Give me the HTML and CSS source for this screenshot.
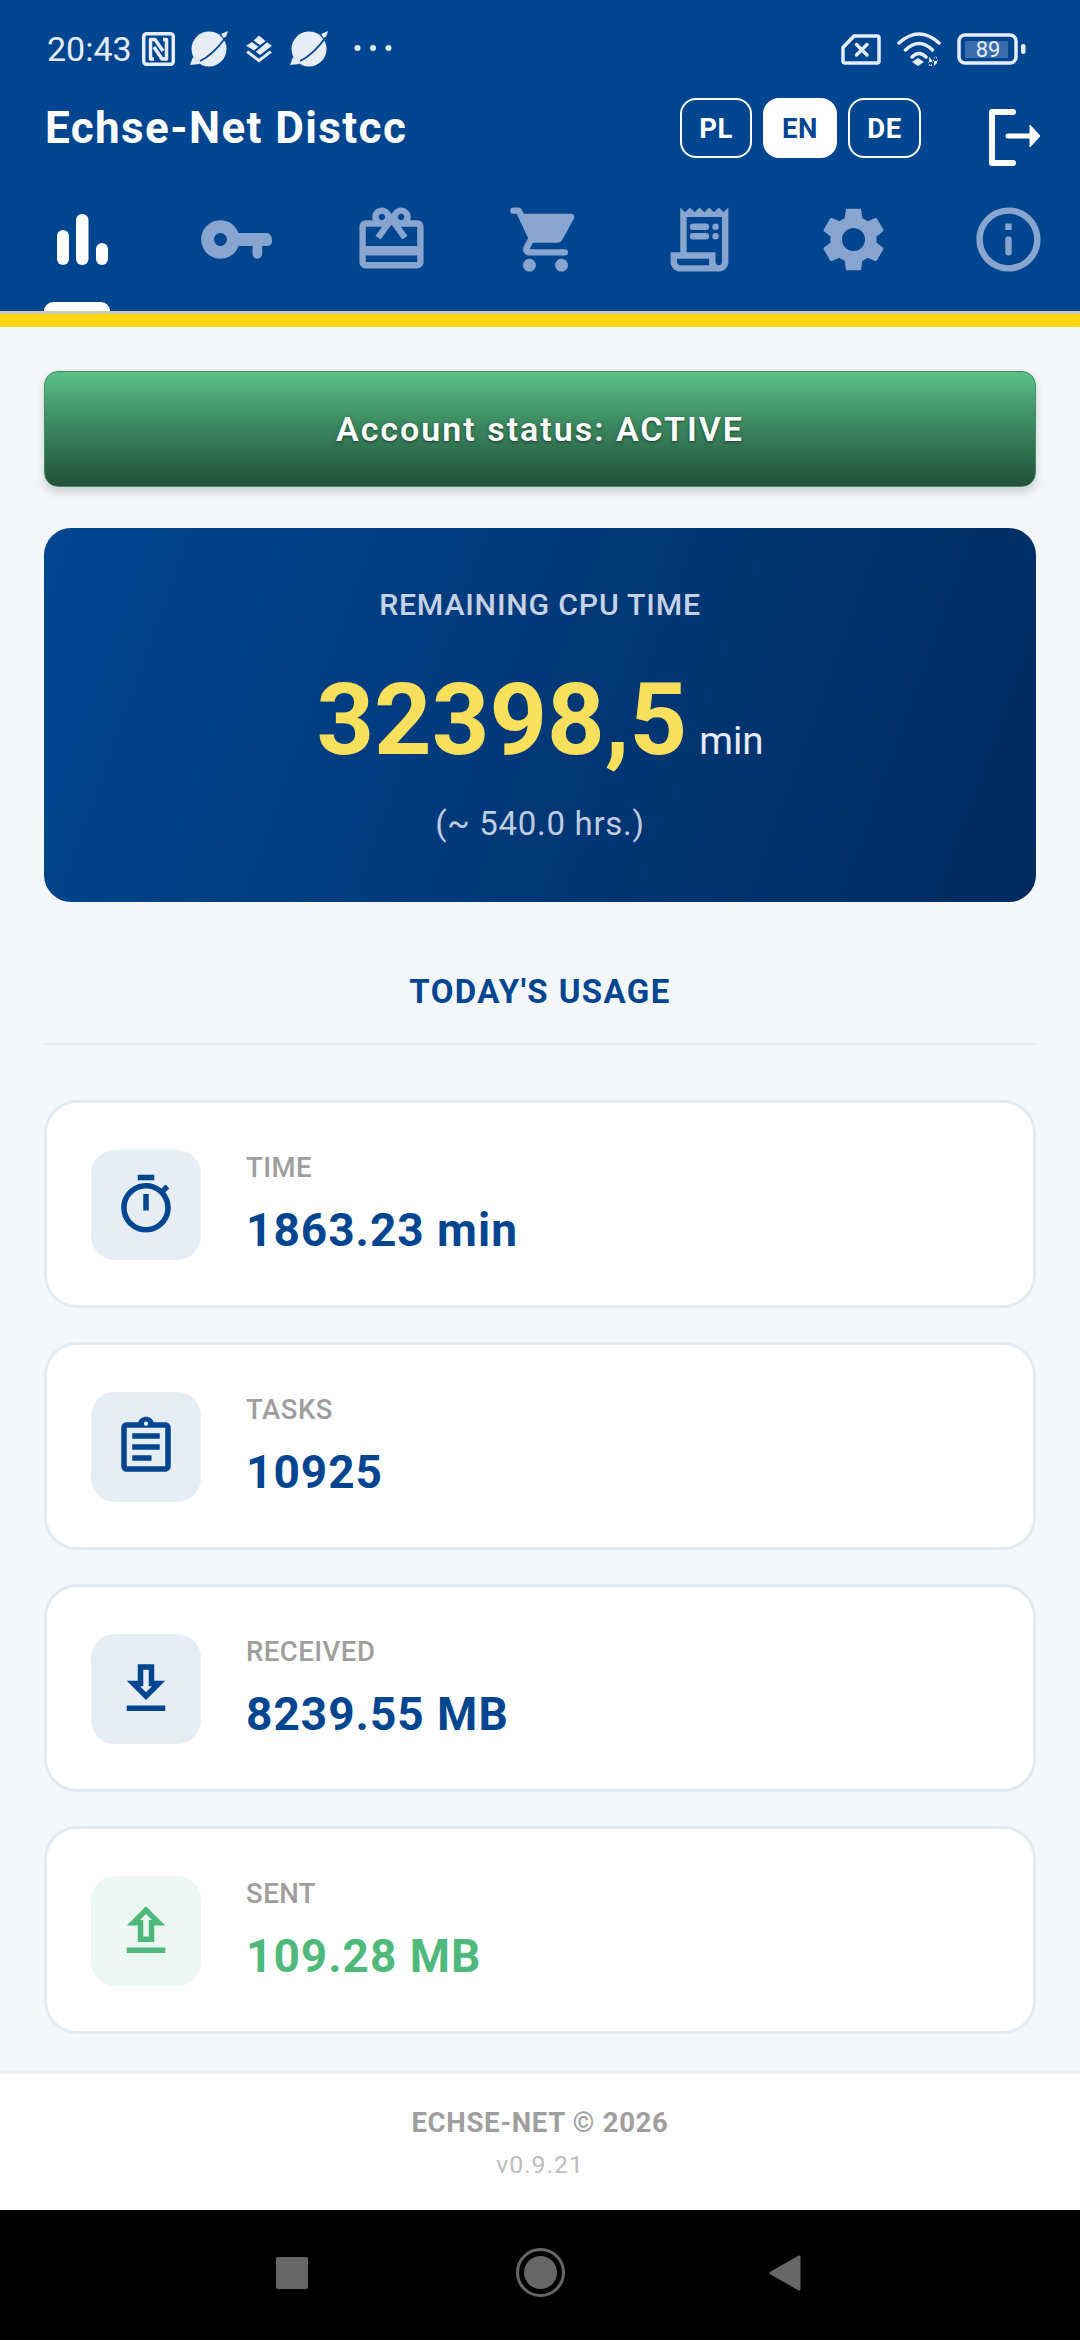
FILE: index.html
```html
<!DOCTYPE html>
<html lang="en">
<head>
<meta charset="utf-8">
<title>Echse-Net Distcc</title>
<link rel="stylesheet" href="styles.css">
</head>
<body>
<div class="screen">
  <header class="header">
    <div class="statusbar">
      <div class="status-left">
        <span class="clock">20:43</span>
        <svg class="si si-nfc" viewBox="0 0 33 34"><rect x="1.7" y="1.7" width="29.6" height="30.6" rx="3" class="s-line"/><path d="M12 27H8.5V7.5H13L21 19M21 7.500H24.500V27H20L12 15" class="s-thin"/></svg>
        <svg class="si si-planet" viewBox="-20 -20 40 40"><circle r="17.500" class="s-fill"/><path d="M12-15 19-18 16-9ZM-16 8-19 16-9 15Z" class="s-fill"/><path d="M-9 12Q4 6 17-12" class="s-slit"/></svg>
        <svg class="si si-stack" viewBox="0 0 26 26"><path d="M13 .5 19 5.500 14 9.500 8 5ZM6.500 6.500 12.500 11 8.500 14.500 1 10ZM20.500 6.700 25 10 14 18.500 10 15.500ZM3 14.500 13 22 23 14.500 25 16.200 13 25.500 1 16.200Z" class="s-fill"/></svg>
        <svg class="si si-planet si-planet2" viewBox="-20 -20 40 40"><circle r="17.500" class="s-fill"/><path d="M12-15 19-18 16-9ZM-16 8-19 16-9 15Z" class="s-fill"/><path d="M-9 12Q4 6 17-12" class="s-slit"/></svg>
        <svg class="si si-dots" viewBox="0 0 38 8"><circle cx="3.500" cy="4" r="3" class="s-fill"/><circle cx="19" cy="4" r="3" class="s-fill"/><circle cx="34.500" cy="4" r="3" class="s-fill"/></svg>
      </div>
      <div class="status-right">
        <svg class="si si-sim" viewBox="0 0 40 31"><path d="M2 13.500 13 2H36A2 2 0 0 1 38 4V27A2 2 0 0 1 36 29H4A2 2 0 0 1 2 27Z" class="s-line"/><path d="M15.500 10.500 26 21M26 10.500 15.500 21" class="s-line"/></svg>
        <svg class="si si-wifi" viewBox="0 0 46 36"><path d="M3 12Q23-6 43 12M9.500 19Q23 6 36.500 19M16 26Q23 19 30 26" class="s-line"/><path d="M22 27 28 31 22 35 16 31Z" class="s-fill"/><path d="M33 26V35H36V29ZM38 35V26H41V32ZM32 31H37L34.500 35ZM36.500 30H42L39.500 25.500Z" class="s-fill"/></svg>
        <svg class="si si-batt" viewBox="0 0 69 32"><rect x="2" y="2" width="57" height="28" rx="6" class="s-line"/><rect x="8" y="8" width="43" height="17" rx="1" class="s-cell"/><rect x="64" y="11" width="4.500" height="10" rx="2" class="s-fill"/><text x="31" y="24" class="s-text">89</text></svg>
      </div>
    </div>

    <div class="titlerow">
      <h1 class="title">Echse-Net Distcc</h1>
      <div class="actions">
        <div class="langs">
          <span class="lang lang-pl">PL</span>
          <span class="lang lang-en lang-active">EN</span>
          <span class="lang lang-de">DE</span>
        </div>
        <svg class="logout" viewBox="0 0 56 60"><path d="M27 6H6V57H27" class="lo-line"/><path d="M22 30H46" class="lo-thin"/><path d="M44 19 54 30 44 41Z" class="lo-head"/></svg>
      </div>
    </div>

    <nav class="tabs">
      <div class="tab tab-active"><svg class="tab-icon" viewBox="0 0 77 77"><rect x="13" y="29" width="12" height="35" rx="6"/><rect x="32" y="13" width="12.500" height="51" rx="6"/><rect x="52" y="42" width="12" height="22" rx="6"/></svg></div>
      <div class="tab"><svg class="tab-icon" viewBox="0 0 24 24"><path d="M12.650 10C11.830 7.670 9.610 6 7 6c-3.310 0-6 2.690-6 6s2.690 6 6 6c2.610 0 4.830-1.670 5.650-4H17v2.500a1.500 1.500 0 0 0 3 0V14h1.500a1.500 1.500 0 0 0 1.500-2 1.800 1.800 0 0 0-1.500-2H12.650zM7 14c-1.100 0-2-.9-2-2s.9-2 2-2 2 .9 2 2-.9 2-2 2z"/></svg></div>
      <div class="tab"><svg class="tab-icon" viewBox="0 0 24 24"><path d="M20 6h-2.180c.11-.31.18-.65.18-1 0-1.660-1.340-3-3-3-1.050 0-1.960.54-2.500 1.350l-.5.67-.5-.68C10.960 2.540 10.050 2 9 2 7.340 2 6 3.340 6 5c0 .35.07.69.18 1H4c-1.110 0-1.990.89-1.990 2L2 19c0 1.110.89 2 2 2h16c1.110 0 2-.89 2-2V8c0-1.110-.89-2-2-2zm-5-2c.55 0 1 .45 1 1s-.45 1-1 1-1-.45-1-1 .45-1 1-1zM9 4c.55 0 1 .45 1 1s-.45 1-1 1-1-.45-1-1 .45-1 1-1zm11 15H4v-2h16v2zm0-5H4V8h5.080L7 10.830 8.620 12 11 8.760l1-1.360 1 1.360L15.380 12 17 10.830 14.920 8H20v6z"/></svg></div>
      <div class="tab"><svg class="tab-icon" viewBox="0 0 24 24"><path d="M7 18c-1.100 0-1.990.9-1.990 2S5.900 22 7 22s2-.9 2-2-.9-2-2-2zM1 3a1 1 0 0 0 1 1h1l3.600 7.590-1.350 2.450c-.16.28-.25.61-.25.96 0 1.100.9 2 2 2h11a1 1 0 0 0 0-2H7.420c-.14 0-.25-.11-.25-.25l.03-.12.9-1.630h7.450c.75 0 1.410-.41 1.750-1.030l3.580-6.490c.08-.14.12-.31.12-.48 0-.55-.45-1-1-1H5.210l-.64-1.380C4.400 2.250 4 2 3.660 2H2a1 1 0 0 0-1 1zm16 15c-1.100 0-1.990.9-1.990 2s.89 2 1.990 2 2-.9 2-2-.9-2-2-2z"/></svg></div>
      <div class="tab"><svg class="tab-icon" viewBox="0 0 24 24"><path fill-rule="evenodd" d="M19.500 3.500 18 2l-1.500 1.500L15 2l-1.500 1.500L12 2l-1.500 1.500L9 2 7.500 3.500 6 2v14H3v3c0 1.660 1.340 3 3 3h12c1.660 0 3-1.340 3-3V2l-1.500 1.500zM19 19c0 .55-.45 1-1 1s-1-.45-1-1v-3H8V5h11v14zM15 20H6c-.55 0-1-.45-1-1v-1h10v2z"/><rect x="9" y="7" width="6" height="2" rx="1"/><rect x="16" y="7" width="2" height="2" rx="1"/><rect x="9" y="10" width="6" height="2" rx="1"/><rect x="16" y="10" width="2" height="2" rx="1"/></svg></div>
      <div class="tab"><svg class="tab-icon" viewBox="0 0 24 24"><path d="M19.140 12.940c.04-.3.06-.61.06-.94 0-.32-.02-.64-.07-.94l2.030-1.580c.18-.14.23-.41.12-.61l-1.920-3.320c-.12-.22-.37-.29-.59-.22l-2.390.96c-.5-.38-1.030-.7-1.620-.94l-.36-2.540c-.04-.24-.24-.41-.48-.41h-3.840c-.24 0-.43.17-.47.41l-.36 2.540c-.59.24-1.130.57-1.620.94l-2.390-.96c-.22-.08-.47 0-.59.22L2.740 8.870c-.12.21-.08.47.12.61l2.030 1.580c-.05.3-.09.63-.09.94s.02.64.07.94l-2.030 1.580c-.18.14-.23.41-.12.61l1.920 3.320c.12.22.37.29.59.22l2.390-.96c.5.38 1.030.7 1.620.94l.36 2.540c.05.24.24.41.48.41h3.840c.24 0 .44-.17.47-.41l.36-2.540c.59-.24 1.130-.56 1.620-.94l2.390.96c.22.08.47 0 .59-.22l1.920-3.320c.12-.22.07-.47-.12-.61l-2.010-1.580zM12 15.600c-1.980 0-3.600-1.620-3.600-3.600s1.620-3.600 3.600-3.600 3.600 1.620 3.600 3.600-1.620 3.600-3.600 3.600z"/></svg></div>
      <div class="tab"><svg class="tab-icon" viewBox="0 0 24 24"><path d="M11 7h2v2h-2zM11 12a1 1 0 0 1 2 0v4a1 1 0 0 1-2 0zM12 2C6.480 2 2 6.480 2 12s4.480 10 10 10 10-4.480 10-10S17.520 2 12 2zm0 18c-4.410 0-8-3.590-8-8s3.590-8 8-8 8 3.590 8 8-3.590 8-8 8z"/></svg></div>
    </nav>
    <div class="tab-indicator"></div>
  </header>

  <main class="content">
    <div class="account">Account status: ACTIVE</div>

    <section class="remaining">
      <div class="remaining-label">REMAINING CPU TIME</div>
      <div class="remaining-value"><span class="remaining-num">32398,5</span><span class="remaining-unit">min</span></div>
      <div class="remaining-sub">(~ 540.0 hrs.)</div>
    </section>

    <h2 class="section-title">TODAY'S USAGE</h2>

    <div class="stats">
      <article class="stat">
        <div class="stat-icon"><svg viewBox="0 0 24 24"><path d="M15 1H9v2h6V1zm-4 13h2V8h-2v6zm8.030-6.610l1.420-1.420c-.43-.51-.9-.99-1.410-1.410l-1.420 1.420C16.070 4.740 14.120 4 12 4c-4.970 0-9 4.030-9 9s4.020 9 9 9 9-4.030 9-9c0-2.120-.74-4.070-1.970-5.610zM12 20c-3.870 0-7-3.130-7-7s3.130-7 7-7 7 3.130 7 7-3.130 7-7 7z"/></svg></div>
        <div class="stat-text"><div class="stat-label">TIME</div><div class="stat-value">1863.23 min</div></div>
      </article>
      <article class="stat">
        <div class="stat-icon"><svg viewBox="0 0 24 24"><path d="M7 15h7v2H7zM7 11h10v2H7zM7 7h10v2H7zM19 3h-4.180C14.400 1.840 13.300 1 12 1s-2.400.84-2.820 2H5c-.14 0-.27.01-.4.04-.39.08-.74.28-1.010.55-.18.18-.33.4-.43.64-.1.23-.16.49-.16.77v14c0 .27.06.54.16.78s.25.45.43.64c.27.27.62.47 1.010.55.13.02.26.03.4.03h14c1.100 0 2-.9 2-2V5c0-1.100-.9-2-2-2zm-7-.25c.41 0 .75.34.75.75s-.34.75-.75.75-.75-.34-.75-.75.34-.75.75-.75zM19 19H5V5h14v14z"/></svg></div>
        <div class="stat-text"><div class="stat-label">TASKS</div><div class="stat-value">10925</div></div>
      </article>
      <article class="stat">
        <div class="stat-icon"><svg viewBox="0 0 24 24"><path fill-rule="evenodd" d="M19 9h-4V3H9v6H5l7 7 7-7zM11 11V5h2v6h1.170L12 13.170 9.830 11H11zM5 18h14v2H5z"/></svg></div>
        <div class="stat-text"><div class="stat-label">RECEIVED</div><div class="stat-value">8239.55 MB</div></div>
      </article>
      <article class="stat stat-green">
        <div class="stat-icon"><svg viewBox="0 0 24 24"><path fill-rule="evenodd" d="M9 16h6v-6h4l-7-7-7 7h4v6zM12 5.830 14.170 8H13v6h-2V8H9.830L12 5.830zM5 18h14v2H5z"/></svg></div>
        <div class="stat-text"><div class="stat-label">SENT</div><div class="stat-value">109.28 MB</div></div>
      </article>
    </div>
  </main>

  <footer class="footer">
    <div class="footer-name">ECHSE-NET © 2026</div>
    <div class="footer-ver">v0.9.21</div>
  </footer>

  <div class="navbar">
    <span class="nav-square"></span>
    <span class="nav-home"><span class="nav-home-dot"></span></span>
    <svg class="nav-back" viewBox="0 0 33 38"><path d="M31 3V35L3 19Z"/></svg>
  </div>
</div>
</body>
</html>
```

FILE: styles.css
```css
* { box-sizing: border-box; }
html, body { margin: 0; padding: 0; }
body { font-family: Roboto, "Liberation Sans", sans-serif; background: #f4f7fa; }

.screen { width: 1080px; height: 2340px; display: flex; flex-direction: column; overflow: hidden; }

/* header */
.header { background: #00458f; border-bottom: 13px solid #ffd514; flex: none; }
.header::after { content: ""; display: block; height: 3px; background: #cdcbb0; }

.statusbar { height: 98px; display: flex; justify-content: space-between; align-items: center; padding: 0 54px 0 47px; color: #e6edf7; }
.status-left, .status-right { display: flex; align-items: center; }
.clock { font-size: 34px; line-height: 40px; margin-right: 10px; }
.si { display: block; flex: none; }
.si-nfc { width: 33px; height: 34px; }
.si-planet { width: 40px; height: 40px; margin-left: 14px; }
.si-stack { width: 28px; height: 28px; margin-left: 16px; }
.si-planet2 { margin-left: 16px; }
.si-dots { width: 38px; height: 8px; margin-left: 25px; margin-top: -2px; }
.si-sim { width: 40px; height: 31px; }
.si-wifi { width: 46px; height: 36px; margin-left: 15px; }
.si-batt { width: 69px; height: 32px; margin-left: 15px; }

.s-line { fill: none; stroke: #e6edf7; stroke-width: 3.5; stroke-linecap: round; stroke-linejoin: round; }
.s-thin { fill: none; stroke: #e6edf7; stroke-width: 3.5; stroke-linejoin: round; }
.s-fill { fill: #e6edf7; }
.s-slit { fill: none; stroke: #00458f; stroke-width: 1.800; }
.s-cell { fill: #3a6bad; }
.s-text { fill: #e6edf7; font-family: Roboto, sans-serif; font-size: 22px; text-anchor: middle; }

.titlerow { height: 67px; display: flex; justify-content: space-between; padding: 0 38px 0 45px; }
.title { margin: 0; font-size: 44px; line-height: 60px; font-weight: 700; color: #fff; letter-spacing: 1.400px; }
.actions { display: flex; }
.langs { display: flex; gap: 11px; height: 60px; }
.lang { height: 60px; border: 2.500px solid #fff; border-radius: 16px; display: flex; align-items: center; justify-content: center; font-size: 27.500px; font-weight: 700; color: #fff; letter-spacing: .5px; }
.lang-pl { width: 72px; }
.lang-en { width: 74px; }
.lang-de { width: 73px; }
.lang-active { background: #fff; color: #00458f; }
.logout { width: 56px; height: 60px; margin-left: 65px; margin-top: 8px; }
.lo-line { fill: none; stroke: #fff; stroke-width: 6; stroke-linecap: round; stroke-linejoin: round; }
.lo-thin { fill: none; stroke: #fff; stroke-width: 5; stroke-linecap: round; }
.lo-head { fill: #fff; stroke: #fff; stroke-width: 1; stroke-linejoin: round; }

.tabs { display: grid; grid-template-columns: repeat(7, 154.300px); padding: 36px 0 0 5.300px; }
.tab { display: flex; justify-content: center; }
.tab-icon { width: 77px; height: 77px; display: block; fill: #88a5cf; }
.tab-active .tab-icon { fill: #fff; }
.tab-indicator { width: 66px; height: 9px; margin: 24px 0 0 44px; background: #fff; border-radius: 9px 9px 0 0; }

/* content */
.content { flex: 1; padding: 44px 44px 0; background: #f4f7fa; }
.account { height: 116px; border-radius: 14px; border: 1.500px solid #3f8a60; background: linear-gradient(180deg, #5cc088 0%, #3b8a60 45%, #234f39 100%); box-shadow: 0 5px 10px rgba(0,0,0,.16); display: flex; align-items: center; justify-content: center; color: #fff; font-size: 34px; font-weight: 600; letter-spacing: 2px; text-shadow: 0 1px 3px rgba(0,0,0,.55); }

.remaining { margin-top: 41px; padding: 57px 0 56px; border-radius: 27px; background: linear-gradient(110deg, #004791 0%, #002a60 100%); text-align: center; }
.remaining-label { font-size: 30.250px; line-height: 40px; font-weight: 500; letter-spacing: .8px; color: #c6d2e4; }
.remaining-value { margin-top: 35px; line-height: 120px; height: 120px; }
.remaining-num { font-size: 100.500px; font-weight: 700; color: #f9e05c; }
.remaining-unit { font-size: 38.500px; color: #e6ecf5; margin-left: 12px; }
.remaining-sub { margin-top: 22px; font-size: 33px; line-height: 44px; color: #bfcce0; letter-spacing: .7px; }

.section-title { margin: 68px 0 0; padding-bottom: 29px; border-bottom: 2px solid #e9ecef; text-align: center; font-size: 33px; line-height: 44px; font-weight: 700; color: #00458f; letter-spacing: 1.400px; }

.stats { margin-top: 55px; display: flex; flex-direction: column; gap: 34px; }
.stat { height: 208px; background: #fff; border: 3px solid #e4eaf2; border-radius: 33px; padding: 47px 44px; display: flex; gap: 45px; }
.stat-icon { width: 110px; height: 110px; flex: none; border-radius: 24px; background: #e6edf5; display: flex; align-items: center; justify-content: center; }
.stat-icon svg { width: 66px; height: 66px; display: block; fill: #00458f; }
.stat-green .stat-icon { background: #edf8f2; }
.stat-green .stat-icon svg { fill: #4fb97c; }
.stat-label { font-size: 27.500px; line-height: 36px; font-weight: 500; color: #9e9e9e; letter-spacing: .5px; }
.stat-value { margin-top: 18px; font-size: 46px; line-height: 52px; font-weight: 700; color: #00458f; letter-spacing: 1px; }
.stat-green .stat-value { color: #4fb97c; }

/* footer */
.footer { flex: none; height: 139px; background: #fff; border-top: 3px solid #eef0f2; padding-top: 29px; text-align: center; }
.footer-name { font-size: 27.500px; line-height: 40px; font-weight: 700; color: #9e9e9e; letter-spacing: .7px; }
.footer-ver { margin-top: 4px; font-size: 24.750px; line-height: 36px; color: #bdbdbd; letter-spacing: 1px; }

/* system nav */
.navbar { flex: none; height: 130px; background: #000; display: flex; align-items: center; padding-left: 276px; }
.nav-square { width: 32px; height: 32px; border-radius: 2px; background: #666; flex: none; margin-top: -5px; }
.nav-home { width: 49px; height: 49px; margin-left: 208px; border-radius: 50%; border: 3.500px solid #666; display: flex; align-items: center; justify-content: center; flex: none; margin-top: -5px; }
.nav-home-dot { width: 33px; height: 33px; border-radius: 50%; background: #666; }
.nav-back { width: 33px; height: 38px; margin-left: 203px; fill: #666; stroke: #666; stroke-width: 3; stroke-linejoin: round; flex: none; margin-top: -5px; }
```
